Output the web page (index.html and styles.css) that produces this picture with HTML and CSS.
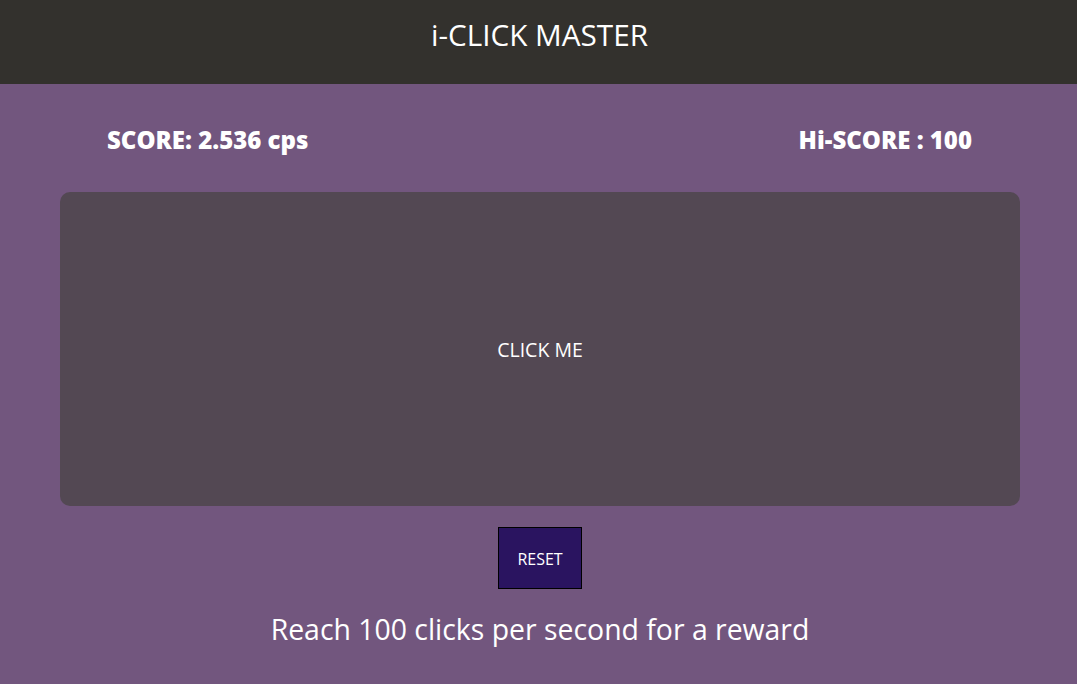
FILE: index.html
```html
<!DOCTYPE html>
<html>
<head>
<meta charset="utf-8">
<link rel="stylesheet" href="styles.css">
</head>
<body>
<header class="top">i-CLICK MASTER</header>
<main class="main">
  <div class="scores">
    <span class="score">SCORE: 2.536 cps</span>
    <span class="score">Hi-SCORE : 100</span>
  </div>
  <div class="pad">CLICK ME</div>
  <button class="reset">RESET</button>
  <p class="hint">Reach 100 clicks per second for a reward</p>
</main>
</body>
</html>
```
FILE: styles.css
```css
html, body {
  margin: 0;
  padding: 0;
}
body {
  background: #72567e;
  font-family: "Open Sans", "Noto Sans", sans-serif;
  color: #ffffff;
  height: 684px;
  overflow: hidden;
}
.top {
  background: #33312d;
  height: 84px;
  box-sizing: border-box;
  padding: 0 0 15px 2px;
  display: flex;
  align-items: center;
  justify-content: center;
  font-size: 29.7px;
}
.main {
  display: flex;
  flex-direction: column;
  align-items: center;
}
.scores {
  align-self: stretch;
  display: flex;
  justify-content: space-between;
  padding: 2px 105px 0 107px;
  height: 108px;
  align-items: center;
  box-sizing: border-box;
}
.score {
  font-weight: 800;
  font-size: 24px;
}
.pad {
  align-self: stretch;
  margin: 0 57px 0 60px;
  height: 314px;
  background: #534853;
  border-radius: 10px;
  display: flex;
  align-items: center;
  justify-content: center;
  font-size: 19.5px;
}
.reset {
  margin: 21px 0 0 3px;
  width: 84px;
  height: 62px;
  background: #2a1460;
  border: 1px solid #000;
  color: #fff;
  font-family: inherit;
  font-size: 16px;
  padding: 1px 0 0;
}
.hint {
  margin: 21px 0 0 3px;
  font-size: 28.4px;
}
```
